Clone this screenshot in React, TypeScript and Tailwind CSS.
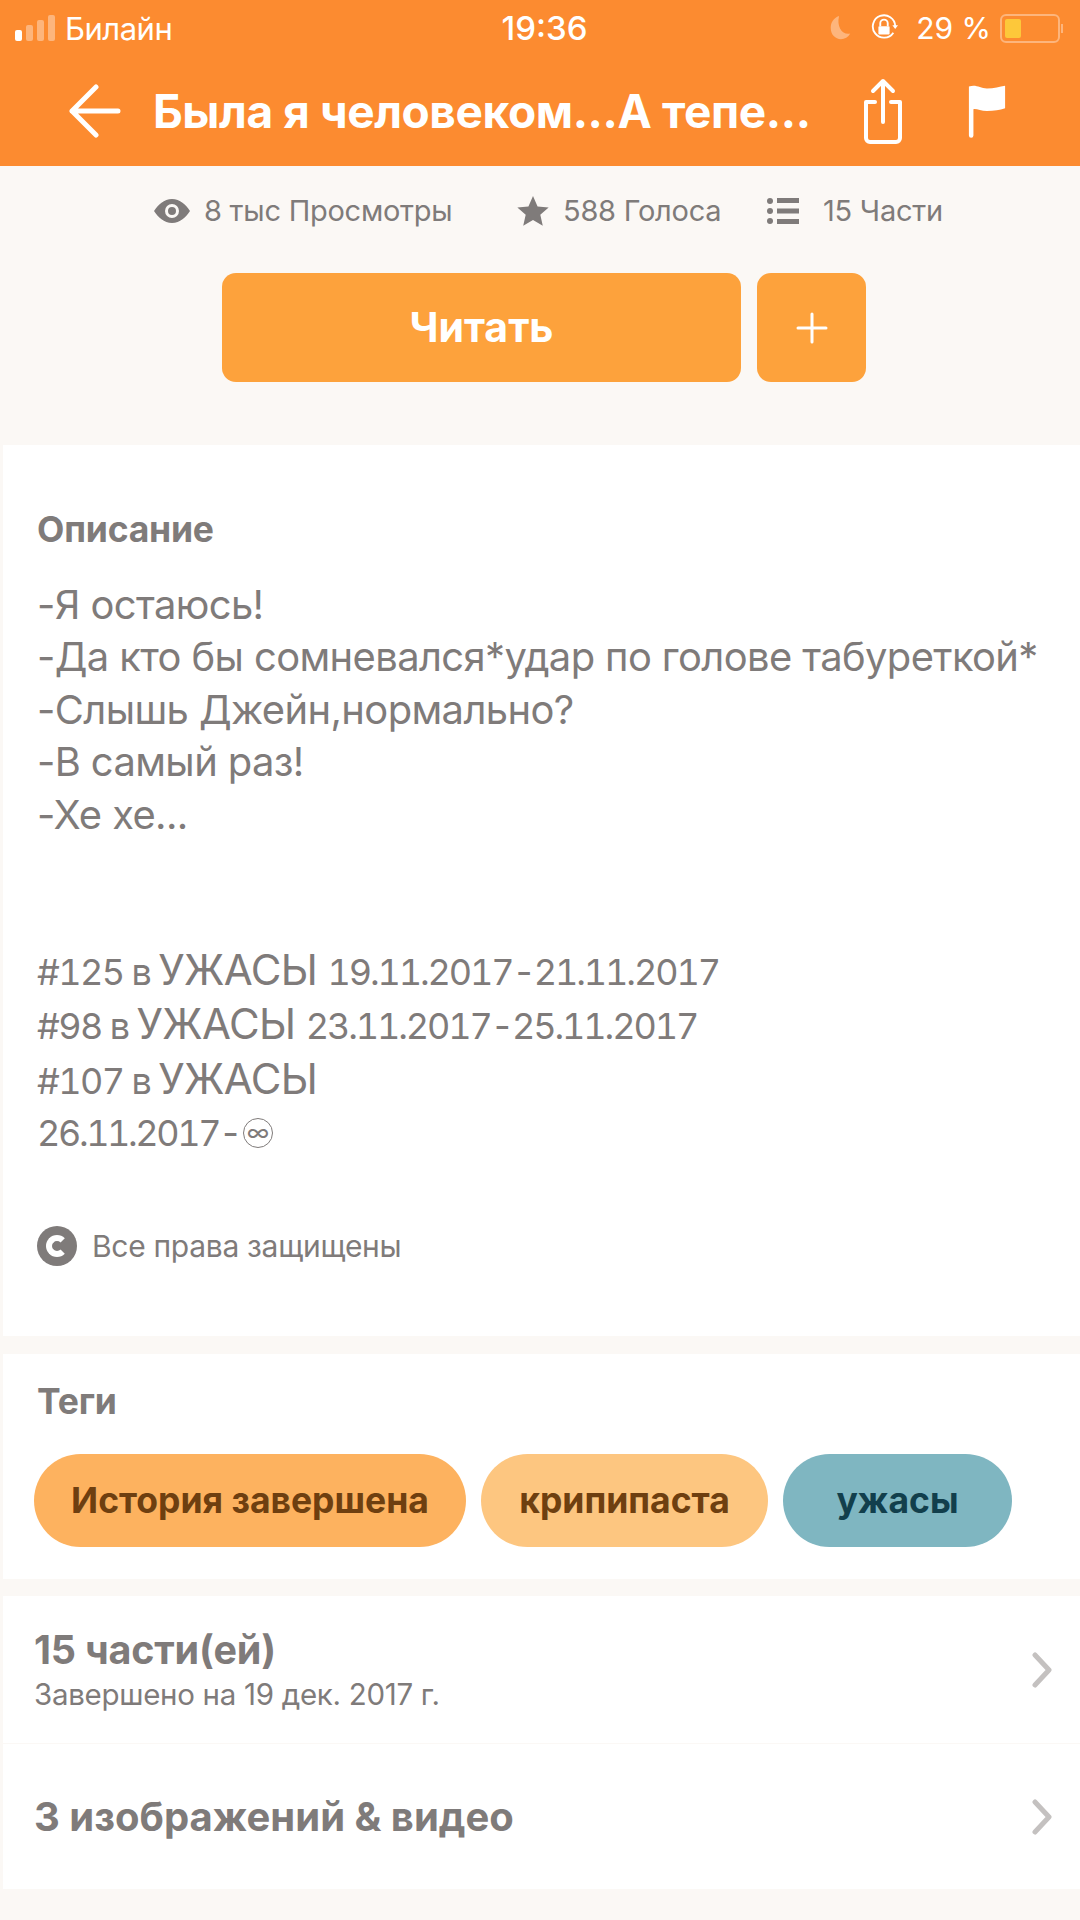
const FONT = "font-['Inter','Noto_Sans',sans-serif]";

function Chevron() {
  return (
    <svg width="22" height="36" viewBox="0 0 22 36" fill="none" stroke="#c4c1c0" strokeWidth="5" strokeLinecap="round" strokeLinejoin="round" className="shrink-0">
      <path d="M4 3l14 15L4 33" />
    </svg>
  );
}

// ---------------------------------------------------------------------------
// Status bar
// ---------------------------------------------------------------------------

function StatusBar() {
  return (
    <div className="flex h-[56px] items-center justify-between pl-[15px] pr-[17px] text-white">
      <div className="flex w-[320px] items-center gap-[10px]">
        <div className="flex items-end gap-[4px]">
          <span className="h-[11px] w-[7px] rounded-[2px] bg-white" />
          <span className="h-[16px] w-[7px] rounded-[2px] bg-[#fdb57c]" />
          <span className="h-[21px] w-[7px] rounded-[2px] bg-[#fdb57c]" />
          <span className="h-[26px] w-[7px] rounded-[2px] bg-[#fdb57c]" />
        </div>
        <span className="text-[31px] leading-none tracking-[-0.5px]">Билайн</span>
      </div>
      <span className="ml-[11px] text-[33px] font-medium leading-none">19:36</span>
      <div className="flex w-[320px] items-center justify-end">
        <svg width="26" height="26" viewBox="0 0 26 28" fill="#fdb57c" className="shrink-0">
          <path d="M12 1C6 3 3 8 3 14c0 7 5 12 11 12 4 0 8-2 10-6-8 2-15-7-12-19z" />
        </svg>
        <svg width="28" height="28" viewBox="0 0 30 30" fill="none" stroke="white" strokeWidth="2" className="ml-[17px] shrink-0">
          <path d="M25 20a12 12 0 1 1 2-7" />
          <path d="M24 12l3 4 3-4" fill="white" stroke="none" />
          <rect x="9" y="13" width="12" height="9" rx="1" fill="white" stroke="none" />
          <path d="M11 13v-3a4 4 0 0 1 8 0v3" />
        </svg>
        <span className="ml-[18px] whitespace-nowrap text-[30px] leading-none">29 %</span>
        <div className="ml-[9px] flex items-center">
          <div className="flex h-[29px] w-[60px] items-center rounded-[6px] border-2 border-[#fdb57c] p-[3px]">
            <span className="h-full w-[16px] rounded-[2px] bg-[#fdc83a]" />
          </div>
          <span className="ml-[1px] h-[9px] w-[2px] bg-[#fdb57c]" />
        </div>
      </div>
    </div>
  );
}

// ---------------------------------------------------------------------------
// Title bar
// ---------------------------------------------------------------------------

function TitleBar() {
  return (
    <div className="flex h-[110px] items-center pl-[69px] text-white">
      <svg width="52" height="54" viewBox="0 0 52 54" fill="none" stroke="white" strokeWidth="5" strokeLinecap="round" strokeLinejoin="round" className="shrink-0">
        <path d="M49 27H3M27 3L3 27l24 24" />
      </svg>
      <h1 className="ml-[32px] w-[708px] shrink-0 whitespace-nowrap text-[46px] font-bold leading-none tracking-[-0.4px]">
        Была я человеком...А тепе...
      </h1>
      <svg width="44" height="66" viewBox="0 0 44 66" fill="none" stroke="white" strokeWidth="4" strokeLinecap="round" strokeLinejoin="round" className="shrink-0">
        <path d="M22 44V3M12 13L22 3l10 10" />
        <path d="M14 24H5v36a4 4 0 0 0 4 4h26a4 4 0 0 0 4-4V24h-9" />
      </svg>
      <svg width="38" height="54" viewBox="0 0 42 58" fill="white" className="ml-[63px] shrink-0">
        <path d="M1 2c8-3 12 2 20 2 8 0 14-2 20-3v25c-6 2-12 3-20 3-7 0-12-3-15-2v29a2.500 2.500 0 0 1-5 0z" />
      </svg>
    </div>
  );
}

// ---------------------------------------------------------------------------
// Stats under the title bar
// ---------------------------------------------------------------------------

function Stats() {
  return (
    <div className="flex h-[90px] items-center pl-[154px] text-[29px] tracking-[-0.25px] text-[#7f7b7a]">
      <svg width="36" height="24" viewBox="0 0 36 24" fill="#7f7b7a" className="shrink-0">
        <path fillRule="evenodd" d="M18 0c8 0 14 6 18 12-4 6-10 12-18 12S4 18 0 12C4 6 10 0 18 0zm0 5a7 7 0 1 0 0 14 7 7 0 0 0 0-14zm0 3a4 4 0 1 1 0 8 4 4 0 0 1 0-8z" />
      </svg>
      <span className="ml-[14px] w-[313px] shrink-0 whitespace-nowrap">8 тыс Просмотры</span>
      <svg width="32" height="30" viewBox="0 0 24 23" fill="#7f7b7a" className="shrink-0">
        <path d="M12 0l3.500 8 8.500.8-6.400 5.600 1.900 8.400L12 18.400 4.500 22.800l1.900-8.400L0 8.800 8.500 8z" />
      </svg>
      <span className="ml-[14px] w-[204px] shrink-0 whitespace-nowrap">588 Голоса</span>
      <svg width="32" height="28" viewBox="0 0 32 28" fill="#7f7b7a" className="shrink-0">
        <circle cx="3" cy="4" r="3" />
        <circle cx="3" cy="14" r="3" />
        <circle cx="3" cy="24" r="3" />
        <rect x="10" y="1" width="22" height="5" />
        <rect x="10" y="11.500" width="22" height="5" />
        <rect x="10" y="22" width="22" height="5" />
      </svg>
      <span className="ml-[24px] whitespace-nowrap">15 Части</span>
    </div>
  );
}

function Actions() {
  return (
    <div className="mt-[17px] flex gap-[16px] pl-[222px]">
      <button className="flex h-[109px] w-[519px] items-center justify-center rounded-[14px] bg-[#fda23c] text-[41px] font-bold text-white">
        Читать
      </button>
      <button className="flex h-[109px] w-[109px] items-center justify-center rounded-[14px] bg-[#fda23c] text-white">
        <svg width="32" height="32" viewBox="0 0 32 32" stroke="white" strokeWidth="3" strokeLinecap="round">
          <path d="M16 2v28M2 16h28" />
        </svg>
      </button>
    </div>
  );
}

// ---------------------------------------------------------------------------
// Description card
// ---------------------------------------------------------------------------

const DESCRIPTION = [
  "-Я остаюсь!",
  "-Да кто бы сомневался*удар по голове табуреткой*",
  "-Слышь Джейн,нормально?",
  "-В самый раз!",
  "-Хе хе...",
];

// The ranking lines mix sizes: wide digits, a larger genre word
function Rank({ place, dates }: { place: string; dates?: string }) {
  return (
    <div className="tabular-nums">
      <span className="text-[36px] tracking-[-1.6px]">{place} в </span>
      <span className="text-[42px] tracking-[-0.6px]">УЖАСЫ</span>{" "}
      {dates && <span className="text-[36px] tracking-[-2.1px]">{dates}</span>}
    </div>
  );
}

function Description() {
  return (
    <section className="ml-[3px] mt-[63px] h-[891px] bg-white pl-[34px] pt-[65px] text-[#7f7b7a]">
      <h2 className="text-[35.500px] font-bold leading-[40px] tracking-[-0.2px]">Описание</h2>
      <div className="mt-[29px] whitespace-nowrap text-[39.900px] leading-[52.400px] tracking-[-0.6px]">
        {DESCRIPTION.map((line) => (
          <div key={line}>{line}</div>
        ))}
        <div className="h-[103px]" />
        <Rank place="#125" dates="19.11.2017-21.11.2017" />
        <Rank place="#98" dates="23.11.2017-25.11.2017" />
        <Rank place="#107" />
        <div className="flex items-center text-[36px] tracking-[-2.4px] tabular-nums">
          26.11.2017-
          <span className="ml-[3px] flex h-[30px] w-[30px] items-center justify-center rounded-full border border-[#7f7b7a] text-[24px] leading-none tracking-normal">
            ∞
          </span>
        </div>
      </div>
      <div className="mt-[66px] flex items-center gap-[15px]">
        <span className="flex h-[40px] w-[40px] items-center justify-center rounded-full bg-[#7f7b7a]">
          <span className="h-[22px] w-[22px] rounded-full border-[6px] border-white border-r-transparent" />
        </span>
        <span className="text-[30px] leading-none tracking-[-0.3px]">Все права защищены</span>
      </div>
    </section>
  );
}

// ---------------------------------------------------------------------------
// Tags card
// ---------------------------------------------------------------------------

const TAGS = [
  { label: "История завершена", cls: "w-[432px] bg-[#fdb25f] text-[#6e3f10]" },
  { label: "крипипаста", cls: "w-[287px] bg-[#fdc680] text-[#6e3f10]" },
  { label: "ужасы", cls: "w-[229px] bg-[#7fb6c1] text-[#123f4c]" },
];

function Tags() {
  return (
    <section className="ml-[3px] mt-[18px] h-[225px] bg-white pl-[34px] pt-[28px]">
      <h2 className="text-[35.500px] font-bold leading-[40px] tracking-[-0.2px] text-[#7f7b7a]">Теги</h2>
      <div className="ml-[-3px] mt-[32px] flex gap-[15px]">
        {TAGS.map((tag) => (
          <span
            key={tag.label}
            className={`flex h-[93px] items-center justify-center rounded-full text-[35.500px] font-bold ${tag.cls}`}
          >
            {tag.label}
          </span>
        ))}
      </div>
    </section>
  );
}

// ---------------------------------------------------------------------------
// Parts / media rows
// ---------------------------------------------------------------------------

function Rows() {
  return (
    <section className="ml-[3px] mt-[17px] h-[293px] bg-white text-[#7f7b7a]">
      <div className="flex h-[147px] items-center justify-between pl-[31px] pr-[27px]">
        <div>
          <div className="text-[39.500px] font-bold leading-[44px] tracking-[-0.2px]">15 части(ей)</div>
          <div className="mt-[4px] text-[29.500px] leading-[36px] tracking-[-0.3px]">Завершено на 19 дек. 2017 г.</div>
        </div>
        <Chevron />
      </div>
      <div className="h-px bg-[#fbf8f5]" />
      <div className="flex h-[145px] items-center justify-between pl-[31px] pr-[27px]">
        <div className="text-[40px] font-bold leading-[44px]">3 изображений &amp; видео</div>
        <Chevron />
      </div>
    </section>
  );
}

export default function App() {
  return (
    <div className={`h-[1920px] w-[1080px] overflow-hidden bg-[#fbf8f5] ${FONT}`}>
      <header className="h-[166px] bg-[#fc8b30]">
        <StatusBar />
        <TitleBar />
      </header>
      <Stats />
      <Actions />
      <Description />
      <Tags />
      <Rows />
    </div>
  );
}
